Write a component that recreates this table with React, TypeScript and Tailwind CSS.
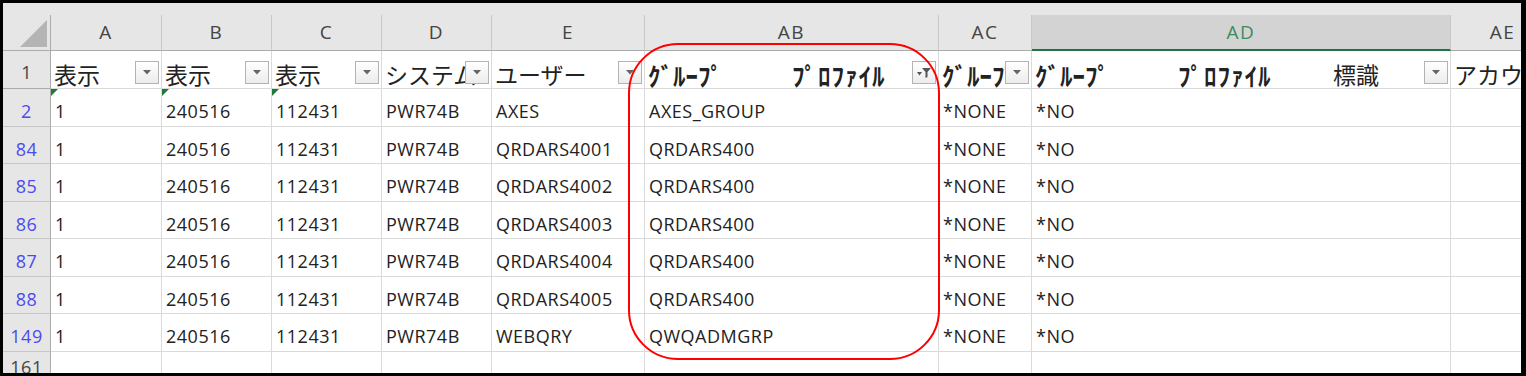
import React from "react";

const latin = "font-['Open_Sans',sans-serif]";
const cjk = "font-['Noto_Sans_CJK_JP','Noto_Sans_CJK_SC',sans-serif]";

const colW = [
  "w-[111px]",
  "w-[110px]",
  "w-[110px]",
  "w-[110px]",
  "w-[153px]",
  "w-[294px]",
  "w-[93px]",
  "w-[419px]",
  "w-[104px]",
];
const letters = ["A", "B", "C", "D", "E", "AB", "AC", "AD", "AE"];

type Row = { n: string; h: string; v: string[]; flag?: boolean };

const rows: Row[] = [
  { n: "2", h: "h-[38px]", v: ["1", "240516", "112431", "PWR74B", "AXES", "AXES_GROUP", "*NONE", "*NO", ""], flag: true },
  { n: "84", h: "h-[37px]", v: ["1", "240516", "112431", "PWR74B", "QRDARS4001", "QRDARS400", "*NONE", "*NO", ""] },
  { n: "85", h: "h-[38px]", v: ["1", "240516", "112431", "PWR74B", "QRDARS4002", "QRDARS400", "*NONE", "*NO", ""] },
  { n: "86", h: "h-[37px]", v: ["1", "240516", "112431", "PWR74B", "QRDARS4003", "QRDARS400", "*NONE", "*NO", ""] },
  { n: "87", h: "h-[38px]", v: ["1", "240516", "112431", "PWR74B", "QRDARS4004", "QRDARS400", "*NONE", "*NO", ""] },
  { n: "88", h: "h-[37px]", v: ["1", "240516", "112431", "PWR74B", "QRDARS4005", "QRDARS400", "*NONE", "*NO", ""] },
  { n: "149", h: "h-[38px]", v: ["1", "240516", "112431", "PWR74B", "WEBQRY", "QWQADMGRP", "*NONE", "*NO", ""] },
];

function FilterBtn({ filtered = false }: { filtered?: boolean }) {
  return (
    <div className="absolute right-[2px] top-[10px] flex h-[23px] w-[24px] items-center justify-center border border-[#b3b3b3] bg-linear-to-b from-[#ffffff] to-[#ececec]">
      {filtered ? (
        <svg width="16" height="13" viewBox="0 0 16 13">
          <polygon points="1,6 6,6 3.5,9.5" fill="#555" />
          <polygon points="6,2 15,2 11.5,6 11.5,11 9.5,12 9.5,6" fill="#555" />
        </svg>
      ) : (
        <svg width="8" height="5" viewBox="0 0 8 5">
          <polygon points="0,0 8,0 4,4.5" fill="#666" />
        </svg>
      )}
    </div>
  );
}

function GreenFlag() {
  return (
    <svg className="absolute left-0 top-0" width="7" height="7" viewBox="0 0 7 7">
      <polygon points="0,0 7,0 0,7" fill="#1f7a3a" />
    </svg>
  );
}

function HeaderRow1() {
  const cell = "relative shrink-0 overflow-hidden whitespace-nowrap border-r border-b border-[#dadada] bg-white h-full pl-[3px] pt-[12px] leading-none text-[#222]";
  const jp = `${cjk} text-[23px]`;
  const kana = `${cjk} text-[25px] font-bold`;
  return (
    <div className="flex h-[38px] shrink-0">
      <div className={`flex w-[48px] shrink-0 justify-center border-r border-b border-[#ababab] bg-[#e6e6e6] pt-[12px] text-[18px] leading-none text-[#444] ${latin}`}>
        1
      </div>
      <div className={`${cell} ${colW[0]}`}>
        <span className={jp}>表示</span>
        <FilterBtn />
      </div>
      <div className={`${cell} ${colW[1]}`}>
        <span className={jp}>表示</span>
        <FilterBtn />
      </div>
      <div className={`${cell} ${colW[2]}`}>
        <span className={jp}>表示</span>
        <FilterBtn />
      </div>
      <div className={`${cell} ${colW[3]}`}>
        <span className={jp}>システム</span>
        <FilterBtn />
      </div>
      <div className={`${cell} ${colW[4]}`}>
        <span className={jp}>ユーザー</span>
        <FilterBtn />
      </div>
      <div className={`${cell} ${colW[5]} flex`}>
        <span className={`${kana} inline-block w-[144px]`}>ｸﾞﾙｰﾌﾟ</span>
        <span className={`${kana} tracking-[1px]`}>ﾌﾟﾛﾌｧｲﾙ</span>
        <FilterBtn filtered />
      </div>
      <div className={`${cell} ${colW[6]}`}>
        <span className={kana}>ｸﾞﾙｰﾌﾟ</span>
        <FilterBtn />
      </div>
      <div className={`${cell} ${colW[7]} flex`}>
        <span className={`${kana} inline-block w-[143px]`}>ｸﾞﾙｰﾌﾟ</span>
        <span className={`${kana} tracking-[1px] inline-block w-[155px]`}>ﾌﾟﾛﾌｧｲﾙ</span>
        <span className={jp}>標識</span>
        <FilterBtn />
      </div>
      <div className={`${cell} ${colW[8]}`}>
        <span className={jp}>アカウント</span>
      </div>
    </div>
  );
}

export default function App() {
  return (
    <div className="h-[376px] w-[1526px] overflow-hidden bg-black pt-[3px] pb-[3px] pl-[3px] pr-[5px]">
      <div className="relative flex h-full w-full flex-col overflow-hidden bg-white">
        {/* column headers */}
        <div className="flex h-[48px] shrink-0 flex-col bg-[#e6e6e6]">
          <div className="h-[12px] shrink-0" />
          <div className="flex h-[36px] shrink-0">
            <div className="relative w-[48px] shrink-0 border-r border-b border-[#ababab]">
              <svg className="absolute right-[3px] bottom-[3px]" width="27" height="27" viewBox="0 0 27 27">
                <polygon points="27,0 27,27 0,27" fill="#b4b4b4" />
              </svg>
            </div>
            {letters.map((l, i) =>
              l === "AD" ? (
                <div
                  key={l}
                  className={`flex shrink-0 items-center justify-center border-r border-b-[2px] border-r-[#c8c8c8] border-b-[#217346] bg-[#d3d3d3] text-[19px] tracking-[1.5px] text-[#3f8b5e] ${latin} ${colW[i]}`}
                >
                  {l}
                </div>
              ) : (
                <div
                  key={l}
                  className={`flex shrink-0 items-center justify-center border-r border-b border-r-[#c8c8c8] border-b-[#ababab] text-[19px] tracking-[1.5px] text-[#444] ${latin} ${colW[i]}`}
                >
                  {l}
                </div>
              )
            )}
          </div>
        </div>

        <HeaderRow1 />

        {rows.map((r) => (
          <div key={r.n} className={`flex shrink-0 ${r.h}`}>
            <div className={`flex w-[48px] shrink-0 justify-center border-r border-b border-r-[#ababab] border-b-[#c6c6c6] bg-[#e6e6e6] pt-[13px] text-[18px] leading-none tracking-[0.5px] text-[#4a4af0] ${latin}`}>
              {r.n}
            </div>
            {r.v.map((v, i) => (
              <div
                key={i}
                className={`relative shrink-0 overflow-hidden whitespace-nowrap border-r border-b border-[#dadada] pl-[4px] pt-[13px] text-[18px] leading-none tracking-[0.5px] text-[#222] ${latin} ${colW[i]}`}
              >
                {r.flag && i < 3 ? <GreenFlag /> : null}
                {v}
              </div>
            ))}
          </div>
        ))}

        {/* partial row 161 */}
        <div className="flex min-h-0 flex-1">
          <div className={`flex w-[48px] shrink-0 justify-center border-r border-[#ababab] bg-[#e6e6e6] pt-[6px] text-[18px] leading-none tracking-[0.5px] text-[#444] ${latin}`}>
            161
          </div>
          {colW.map((w, i) => (
            <div key={i} className={`shrink-0 border-r border-[#dadada] ${w}`} />
          ))}
        </div>

        {/* red highlight */}
        <div className="pointer-events-none absolute left-[625px] top-[40px] h-[317px] w-[312px] rounded-[50px] border-2 border-[#ff0000]" />
      </div>
    </div>
  );
}
